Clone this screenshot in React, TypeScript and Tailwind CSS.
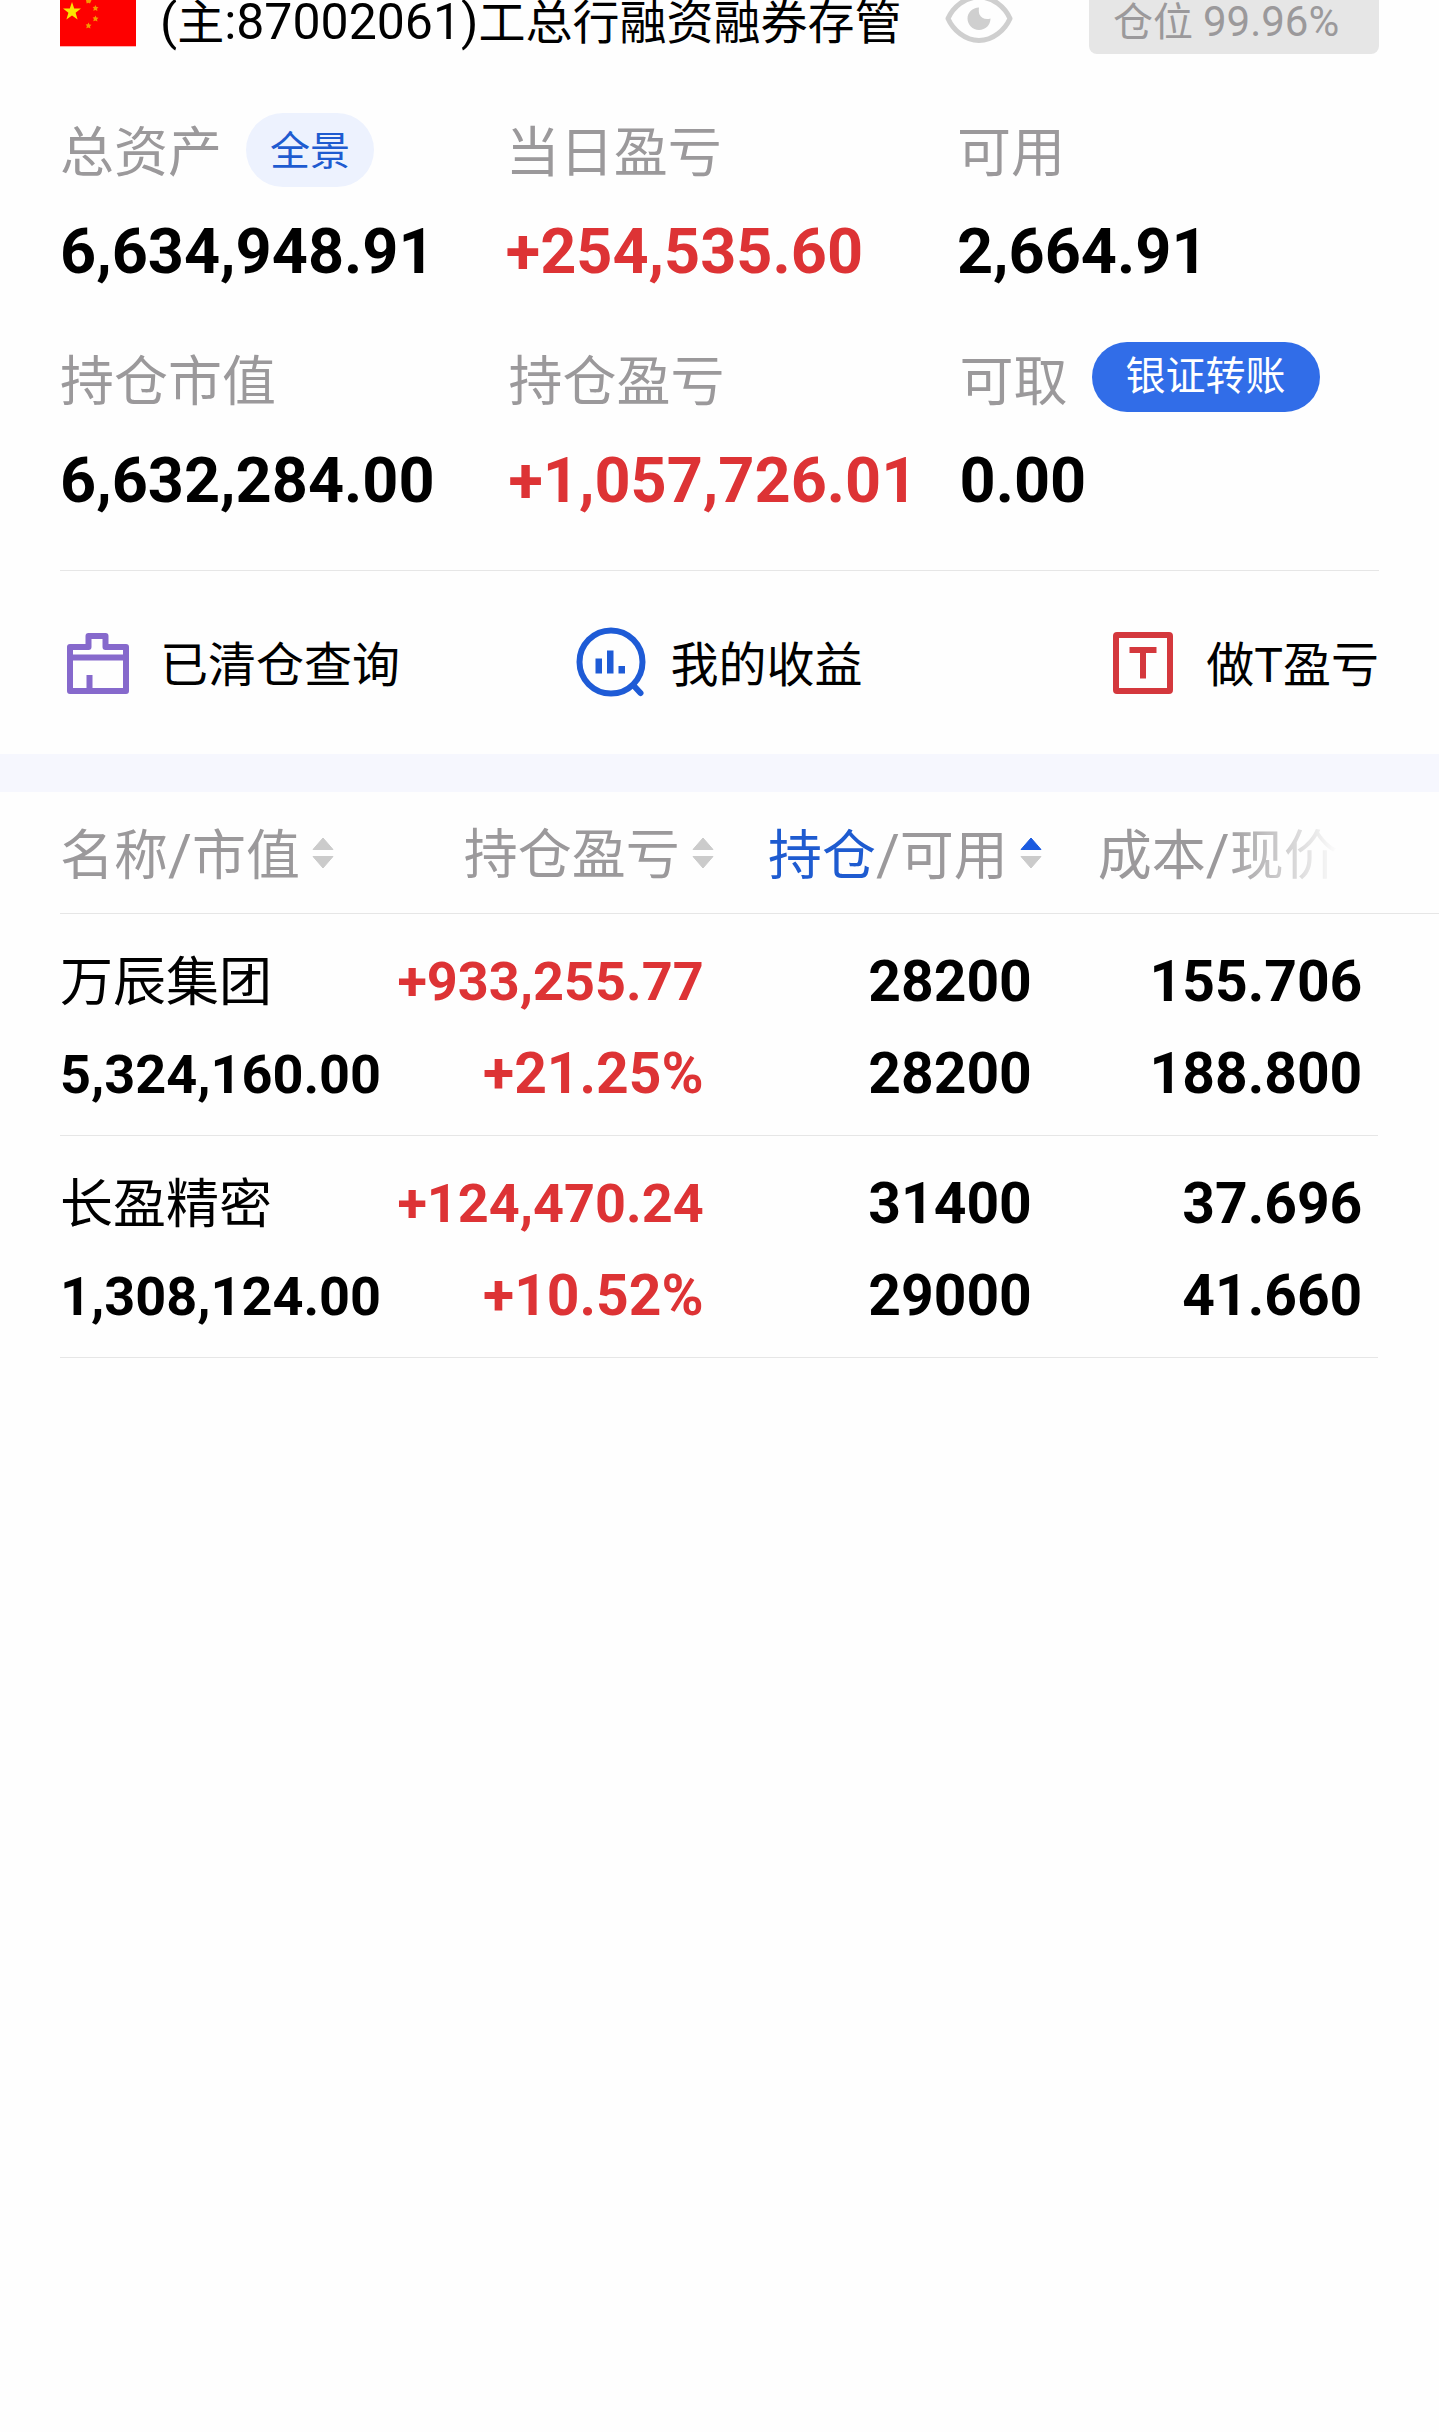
import type { ReactNode } from "react";
import clsx from "clsx";

interface Holding {
  name: string;
  marketValue: string;
  profit: string;
  profitRate: string;
  position: string;
  available: string;
  cost: string;
  price: string;
}

const holdings: Holding[] = [
  {
    name: "万辰集团",
    marketValue: "5,324,160.00",
    profit: "+933,255.77",
    profitRate: "+21.25%",
    position: "28200",
    available: "28200",
    cost: "155.706",
    price: "188.800",
  },
  {
    name: "长盈精密",
    marketValue: "1,308,124.00",
    profit: "+124,470.24",
    profitRate: "+10.52%",
    position: "31400",
    available: "29000",
    cost: "37.696",
    price: "41.660",
  },
];

function FlagIcon() {
  return (
    <svg className="h-[47px] w-[76px] shrink-0" viewBox="0 0 76 47" aria-hidden="true">
      <rect width="76" height="46" fill="#fe0000" />
      <rect y="46" width="76" height="1" fill="#ffb0b0" />
      <path d="M12 2l2.200 6.600H21l-5.400 4.200 2 6.800L12 15.500l-5.600 4.100 2-6.800L3 8.600h6.800z" fill="#fbe400" />
      <g fill="#f59a00">
        <path d="M26 0h5.500l-1.500 3.500-1.500-.8-1.800.8z" />
        <path d="M35.500 5l.9 2 2.100.3-1.500 1.500.4 2.200-1.900-1-2.200.8.600-2.200-1.200-1.600 2-.2z" />
        <path d="M35.500 15.500l.9 2 2.100.3-1.500 1.500.4 2.200-1.900-1-2.200.8.600-2.200-1.200-1.600 2-.2z" />
        <path d="M28.500 22.500l.9 2 2.100.3-1.500 1.500.4 2.200-1.900-1-2.200.8.600-2.200-1.200-1.600 2-.2z" />
      </g>
    </svg>
  );
}

function EyeIcon() {
  return (
    <svg className="h-[44px] w-[68px]" viewBox="0 0 68 44" fill="none" aria-hidden="true">
      <path
        d="M3 18.500C8 7 20-3 34-3s26 10 31 21.500C60 30 48 40.500 34 40.500S8 30 3 18.500z"
        stroke="#cfcfcf"
        strokeWidth="5"
        strokeLinejoin="round"
      />
      <path d="M34 7.500C27.500 7.500 22.500 12.500 22.500 18.500S27.500 30 34 30s11.500-5 11.500-11.500c-5 1.500-9.500-.5-11-4-.8-2-.8-4.500-.5-7z" fill="#cfcfcf" />
    </svg>
  );
}

function ClearedIcon() {
  return (
    <svg className="h-[76px] w-[76px] shrink-0" viewBox="0 0 76 76" fill="none" stroke="#8669cc" aria-hidden="true">
      <path d="M10 22h18.500V11h17v11H66V66H10z" strokeWidth="6" strokeLinejoin="round" />
      <path d="M10 32.500h56M29.500 50v16" strokeWidth="6" />
    </svg>
  );
}

function IncomeIcon() {
  return (
    <svg className="h-[76px] w-[76px] shrink-0" viewBox="0 0 76 76" fill="none" aria-hidden="true">
      <circle cx="41" cy="37" r="31.500" stroke="#1e5bd6" strokeWidth="6" />
      <path d="M64 61l6.500 7" stroke="#1e5bd6" strokeWidth="6" strokeLinecap="round" />
      <path d="M25.500 33.500h6.500V48.500h-6.500zM37 25.500h6.500v23H37zM48.500 41h6.500v7.500h-6.500z" fill="#1e5bd6" />
    </svg>
  );
}

function DayTradeIcon() {
  return (
    <svg className="h-[76px] w-[76px] shrink-0" viewBox="0 0 76 76" fill="none" stroke="#d4383d" aria-hidden="true">
      <rect x="10" y="10" width="54" height="56" rx="1" strokeWidth="6" strokeLinejoin="round" />
      <path d="M23.500 25h27M37 25v28.500" strokeWidth="6" />
    </svg>
  );
}

function Sorter({ active = false }: { active?: boolean }) {
  return (
    <svg className="h-[32px] w-[22px] shrink-0" viewBox="0 0 22 32" aria-hidden="true">
      <path d="M11 1l10 11.500H1z" fill={active ? "#1b5be0" : "#cbcbcb"} stroke={active ? "#1b5be0" : "#cbcbcb"} strokeLinejoin="round" />
      <path d="M11 31L1 19.500h20z" fill="#cbcbcb" stroke="#cbcbcb" strokeLinejoin="round" />
    </svg>
  );
}

function Slash() {
  return <span className="text-[58px]">/</span>;
}

interface StatProps {
  label: string;
  value: string;
  red?: boolean;
  children?: ReactNode;
}

function Stat({ label, value, red, children }: StatProps) {
  return (
    <div>
      <dt className="flex h-[74px] items-center gap-6 text-[54px] leading-[74px] text-[#9b999b]">
        <span className="pt-2">{label}</span>
        {children}
      </dt>
      <dd className={clsx("mt-[33px] text-[63px] leading-[64px] font-bold", red && "text-[#dd3335]")}>{value}</dd>
    </div>
  );
}

export default function App() {
  return (
    <div className="min-h-screen bg-[#fefefe] font-[Roboto,'Noto_Sans_CJK_SC',sans-serif] whitespace-nowrap text-black">
      <header className="flex h-[54px] items-start px-[60px]">
        <FlagIcon />
        <h1 className="ml-6 text-[47px] leading-[44px]">
          <span className="text-[50px]">(</span>主<span className="text-[50px]">:87002061)</span>工总行融资融券存管
        </h1>
        <button type="button" aria-label="隐藏金额" className="ml-11">
          <EyeIcon />
        </button>
        <button type="button" className="ml-auto h-[54px] w-[290px] rounded-b-lg bg-[#e6e6e6] px-6 pb-2.5 text-left text-[40px] leading-[44px] text-[#9b999b]">
          仓位 <span className="text-[42px]">99.96%</span>
        </button>
      </header>

      <main>
        <section className="px-[60px] pt-[59px]">
          <dl className="grid grid-cols-[33.8%_34.2%_1fr]">
            <Stat label="总资产" value="6,634,948.91">
              <button type="button" className="h-[74px] rounded-full bg-[#edf2fe] px-6 pt-1 text-[40px] leading-[70px] text-[#1e5bd0]">
                全景
              </button>
            </Stat>
            <Stat label="当日盈亏" value="+254,535.60" red />
            <Stat label="可用" value="2,664.91" />
          </dl>
          <dl className="grid grid-cols-[34%_34.2%_1fr] border-b border-[#e6e6e6] pt-[58px] pb-[57px]">
            <Stat label="持仓市值" value="6,632,284.00" />
            <Stat label="持仓盈亏" value="+1,057,726.01" red />
            <Stat label="可取" value="0.00">
              <button type="button" className="h-[70px] self-start rounded-full bg-[#316de8] px-[34px] text-[40px] leading-[70px] text-white">
                银证转账
              </button>
            </Stat>
          </dl>

          <nav className="grid h-[183px] grid-cols-[38.7%_1fr_auto] items-center text-[48px]">
            <a href="#cleared" className="flex items-center gap-6">
              <ClearedIcon />
              <span className="pt-1.5">已清仓查询</span>
            </a>
            <a href="#income" className="flex items-center gap-6">
              <IncomeIcon />
              <span className="pt-1.5">我的收益</span>
            </a>
            <a href="#day-trade" className="flex items-center gap-6">
              <DayTradeIcon />
              <span className="pt-1.5">做T盈亏</span>
            </a>
          </nav>
        </section>

        <section className="border-t-[38px] border-[#f6f7fe] pl-[60px]">
          <table className="w-full table-fixed border-separate border-spacing-0">
            <colgroup>
              <col className="w-[23.5%]" />
              <col className="w-[23.9%]" />
              <col className="w-[23.8%]" />
              <col className="w-[24.4%]" />
              <col />
            </colgroup>
            <thead className="text-[54px] leading-[80px] text-[#9b999b]">
              <tr className="h-[122px] *:border-b *:border-[#e6e6e6] *:p-0 *:font-normal">
                <th scope="col">
                  <button type="button" className="flex items-center gap-3">
                    <span className="pt-1.5">名称<Slash />市值</span>
                    <Sorter />
                  </button>
                </th>
                <th scope="col">
                  <button type="button" className="ml-auto flex items-center gap-3">
                    <span className="pt-1.5">持仓盈亏</span>
                    <Sorter />
                  </button>
                </th>
                <th scope="col" aria-sort="ascending">
                  <button type="button" className="ml-auto flex items-center gap-3">
                    <span className="pt-1.5"><span className="text-[#1e5bd0]">持仓</span><Slash />可用</span>
                    <Sorter active />
                  </button>
                </th>
                <th scope="col">
                  <button type="button" className="ml-14 block pt-1.5 [mask-image:linear-gradient(to_right,black_52%,transparent)]">
                    成本<Slash />现价
                  </button>
                </th>
                <td></td>
              </tr>
            </thead>
            <tbody className="text-right text-[57px] leading-[92px] font-bold">
              {holdings.map((h) => (
                <tr key={h.name}>
                  <td className="border-b border-[#e6e6e6] pt-[23px] pb-3.5 text-left text-[54px]">
                    <p className="text-[53px] font-normal">{h.name}</p>
                    <p>{h.marketValue}</p>
                  </td>
                  <td className="border-b border-[#e6e6e6] pt-[22px] pr-2.5 pb-[15px] text-[#dd3335]">
                    <p className="text-[54px]">{h.profit}</p>
                    <p>{h.profitRate}</p>
                  </td>
                  <td className="border-b border-[#e6e6e6] pt-[22px] pr-2.5 pb-[15px]">
                    <p>{h.position}</p>
                    <p>{h.available}</p>
                  </td>
                  <td className="border-b border-[#e6e6e6] pt-[22px] pr-4 pb-[15px]">
                    <p>{h.cost}</p>
                    <p>{h.price}</p>
                  </td>
                  <td></td>
                </tr>
              ))}
            </tbody>
          </table>
        </section>
      </main>
    </div>
  );
}
